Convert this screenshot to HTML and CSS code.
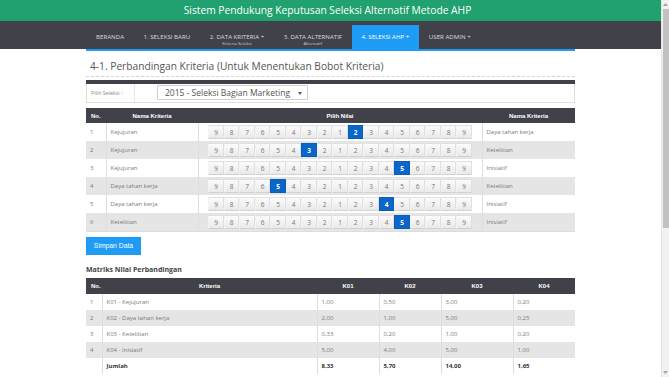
FILE: index.html
```html
<!DOCTYPE html>
<html lang="id">
<head>
<meta charset="utf-8">
<title>Sistem Pendukung Keputusan Seleksi Alternatif Metode AHP</title>
<link rel="stylesheet" href="styles.css">
</head>
<body>
<div class="page">
  <header class="topbar">Sistem Pendukung Keputusan Seleksi Alternatif Metode AHP</header>
  <nav class="navbar">
    <div class="nav-inner">
      <div class="nav-item"><span class="nav-label">BERANDA</span></div>
      <div class="nav-item"><span class="nav-label">1. SELEKSI BARU</span></div>
      <div class="nav-item"><span class="nav-label">2. DATA KRITERIA +</span><span class="nav-sub">Kriteria Seleksi</span></div>
      <div class="nav-item"><span class="nav-label">3. DATA ALTERNATIF</span><span class="nav-sub">Alternatif</span></div>
      <div class="nav-item active"><span class="nav-label">4. SELEKSI AHP +</span></div>
      <div class="nav-item"><span class="nav-label">USER ADMIN +</span></div>
    </div>
  </nav>
  <main class="content">
    <h2 class="page-title">4-1. Perbandingan Kriteria (Untuk Menentukan Bobot Kriteria)</h2>
    <div class="select-panel">
      <div class="panel-top"></div>
      <div class="select-row">
        <div class="select-label">Pilih Seleksi :</div>
        <div class="select-cell">
          <div class="select-box">2015 - Seleksi Bagian Marketing <svg class="caret" width="4" height="3" viewBox="0 0 4 3"><path d="M0 0H4L2 3Z" fill="#555"/></svg></div>
        </div>
      </div>
    </div>

    <table class="cmp">
      <colgroup><col class="c-no"><col class="c-name"><col class="c-pick"><col class="c-name2"></colgroup>
      <thead>
        <tr><th class="left">No.</th><th>Nama Kriteria</th><th>Pilih Nilai</th><th>Nama Kriteria</th></tr>
      </thead>
      <tbody>
        <tr><td>1</td><td>Kejujuran</td><td class="pick"><div class="btn-group"><span class="b">9</span><span class="b">8</span><span class="b">7</span><span class="b">6</span><span class="b">5</span><span class="b">4</span><span class="b">3</span><span class="b">2</span><span class="b">1</span><span class="b on">2</span><span class="b">3</span><span class="b">4</span><span class="b">5</span><span class="b">6</span><span class="b">7</span><span class="b">8</span><span class="b">9</span></div></td><td>Daya tahan kerja</td></tr>
        <tr><td>2</td><td>Kejujuran</td><td class="pick"><div class="btn-group"><span class="b">9</span><span class="b">8</span><span class="b">7</span><span class="b">6</span><span class="b">5</span><span class="b">4</span><span class="b on">3</span><span class="b">2</span><span class="b">1</span><span class="b">2</span><span class="b">3</span><span class="b">4</span><span class="b">5</span><span class="b">6</span><span class="b">7</span><span class="b">8</span><span class="b">9</span></div></td><td>Ketelitian</td></tr>
        <tr><td>3</td><td>Kejujuran</td><td class="pick"><div class="btn-group"><span class="b">9</span><span class="b">8</span><span class="b">7</span><span class="b">6</span><span class="b">5</span><span class="b">4</span><span class="b">3</span><span class="b">2</span><span class="b">1</span><span class="b">2</span><span class="b">3</span><span class="b">4</span><span class="b on">5</span><span class="b">6</span><span class="b">7</span><span class="b">8</span><span class="b">9</span></div></td><td>Inisiatif</td></tr>
        <tr><td>4</td><td>Daya tahan kerja</td><td class="pick"><div class="btn-group"><span class="b">9</span><span class="b">8</span><span class="b">7</span><span class="b">6</span><span class="b on">5</span><span class="b">4</span><span class="b">3</span><span class="b">2</span><span class="b">1</span><span class="b">2</span><span class="b">3</span><span class="b">4</span><span class="b">5</span><span class="b">6</span><span class="b">7</span><span class="b">8</span><span class="b">9</span></div></td><td>Ketelitian</td></tr>
        <tr><td>5</td><td>Daya tahan kerja</td><td class="pick"><div class="btn-group"><span class="b">9</span><span class="b">8</span><span class="b">7</span><span class="b">6</span><span class="b">5</span><span class="b">4</span><span class="b">3</span><span class="b">2</span><span class="b">1</span><span class="b">2</span><span class="b">3</span><span class="b on">4</span><span class="b">5</span><span class="b">6</span><span class="b">7</span><span class="b">8</span><span class="b">9</span></div></td><td>Inisiatif</td></tr>
        <tr><td>6</td><td>Ketelitian</td><td class="pick"><div class="btn-group"><span class="b">9</span><span class="b">8</span><span class="b">7</span><span class="b">6</span><span class="b">5</span><span class="b">4</span><span class="b">3</span><span class="b">2</span><span class="b">1</span><span class="b">2</span><span class="b">3</span><span class="b">4</span><span class="b on">5</span><span class="b">6</span><span class="b">7</span><span class="b">8</span><span class="b">9</span></div></td><td>Inisiatif</td></tr>
      </tbody>
    </table>

    <button class="btn-save" type="button">Simpan Data</button>

    <h3 class="section-title">Matriks Nilai Perbandingan</h3>
    <table class="matrix">
      <colgroup><col class="m-no"><col class="m-name"><col class="m-k"><col class="m-k"><col class="m-k3"><col class="m-k"></colgroup>
      <thead>
        <tr><th class="left">No.</th><th>Kriteria</th><th>K01</th><th>K02</th><th>K03</th><th>K04</th></tr>
      </thead>
      <tbody>
        <tr><td>1</td><td>K01 - Kejujuran</td><td>1,00</td><td>0,50</td><td>3,00</td><td>0,20</td></tr>
        <tr><td>2</td><td>K02 - Daya tahan kerja</td><td>2,00</td><td>1,00</td><td>5,00</td><td>0,25</td></tr>
        <tr><td>3</td><td>K03 - Ketelitian</td><td>0,33</td><td>0,20</td><td>1,00</td><td>0,20</td></tr>
        <tr><td>4</td><td>K04 - Inisiatif</td><td>5,00</td><td>4,00</td><td>5,00</td><td>1,00</td></tr>
        <tr class="total"><td></td><td>Jumlah</td><td>8,33</td><td>5,70</td><td>14,00</td><td>1,65</td></tr>
      </tbody>
    </table>
  </main>
</div>
<div class="scrollbar">
  <div class="sb-arrow"><svg width="5" height="3" viewBox="0 0 5 3"><path d="M0 3H5L2.5 0Z" fill="#a3a3a3"/></svg></div>
  <div class="sb-thumb"></div>
  <div class="sb-space"></div>
  <div class="sb-arrow"><svg width="5" height="3" viewBox="0 0 5 3"><path d="M0 0H5L2.5 3Z" fill="#a3a3a3"/></svg></div>
</div>
</body>
</html>
```
FILE: styles.css
```css
* { box-sizing: border-box; }
html, body { margin: 0; padding: 0; }
body {
  display: flex;
  width: 669px;
  height: 377px;
  overflow: hidden;
  background: #fff;
  font-family: "Open Sans", "Liberation Sans", sans-serif;
  color: #666;
}
.page { flex: 1; min-width: 0; }

/* scrollbar */
.scrollbar {
  width: 8px;
  background: #f1f1f1;
  border-left: 1px solid #e4e4e4;
  display: flex;
  flex-direction: column;
  align-items: center;
}
.sb-arrow { height: 9px; display: flex; align-items: center; justify-content: center; }
.sb-thumb { width: 6px; height: 219px; background: #c1c1c1; }
.sb-space { flex: 1; }

/* header */
.topbar {
  background: #21a070;
  color: #fff;
  height: 21px;
  line-height: 21px;
  font-size: 10.25px;
  text-align: center;
  padding-right: 6px;
}
.navbar { background: #414249; height: 28px; }
.nav-inner {
  width: 489px;
  margin: 0 auto;
  height: 30px;
  padding-top: 4px;
  border-bottom: 2px solid #1e9bf5;
  display: flex;
}
.nav-item {
  height: 24px;
  padding: 8px 9.5px 0 10px;
  display: flex;
  flex-direction: column;
  align-items: center;
  color: #d8d8dc;
}
.nav-item.active { background: #1e9bf5; color: #fff; }
.nav-label { font-size: 6.15px; line-height: 8px; white-space: nowrap; }
.nav-sub { font-size: 4.3px; line-height: 5px; white-space: nowrap; color: #cfcfd4; }

/* content */
.content { width: 489px; margin: 0 auto; }
.page-title {
  margin: 10px 0 3px;
  padding: 0 0 3px 4px;
  font-size: 10.2px;
  line-height: 14px;
  font-weight: 400;
  color: #555;
  border-bottom: 1px dashed #d4d4d4;
}
.panel-top { height: 4px; background: #414249; }
.select-row {
  height: 19px;
  display: flex;
  border: 1px solid #dedede;
  border-top: none;
}
.select-label {
  width: 48px;
  font-size: 5.3px;
  line-height: 18px;
  padding-left: 4px;
  color: #888;
  border-right: 1px solid #e6e6e6;
}
.select-cell { flex: 1; padding: 1px 0 0 22px; }
.select-box {
  width: 151px;
  height: 15px;
  border: 1px solid #d0d0d0;
  border-radius: 1px;
  font-size: 8.5px;
  line-height: 13px;
  padding-left: 7px;
  color: #555;
  white-space: nowrap;
}
.caret { margin-left: 6px; vertical-align: middle; }

/* comparison table */
table { border-collapse: collapse; table-layout: fixed; width: 489px; }
.cmp { margin-top: 5px; border-bottom: 1px solid #dcdcdc; }
.c-no { width: 20px; }
.c-name { width: 92px; }
.c-pick { width: 284px; }
.c-name2 { width: 93px; }
th {
  background: #414249;
  color: #fff;
  font-family: "Liberation Sans", Arial, sans-serif;
  font-weight: 700;
  font-size: 6px;
  text-align: center;
  padding: 0;
}
th.left { text-align: left; padding-left: 5px; }
.cmp th { height: 15px; }
td {
  padding: 0 0 0 4px;
  font-size: 6px;
  color: #7a7a7a;
  border-left: 1px solid #dedede;
  white-space: nowrap;
}
td:first-child { border-left: none; padding-left: 4px; }
.cmp td { height: 18px; }
tbody tr:nth-child(even) td { background: #e5e5e5; }
td.pick { padding: 0; text-align: center; }
.btn-group { display: inline-flex; vertical-align: middle; }
.b {
  width: 15.5px;
  height: 14px;
  line-height: 13px;
  text-align: center;
  font-size: 6.5px;
  color: #777;
  background: linear-gradient(#fbfbfb, #e9e9e9);
  border: 1px solid #e0e0e0;
  border-left-color: #f4f4f4;
  border-bottom-color: #d2d2d2;
}
.b.on { background: #0a66c8; border-color: #0a5db8; color: #fff; font-weight: 700; }

.btn-save {
  display: block;
  margin-top: 5px;
  width: 55px;
  height: 18px;
  padding: 0;
  border: none;
  background: #1e9bf5;
  color: #fff;
  font-family: "Liberation Sans", Arial, sans-serif;
  font-size: 6.8px;
}

.section-title {
  margin: 10px 0 3px;
  font-size: 7px;
  line-height: 10px;
  font-weight: 700;
  color: #444;
}
.m-no { width: 16px; }
.m-name { width: 215px; }
.m-k { width: 62px; }
.m-k3 { width: 72px; }
.matrix th { height: 16px; }
.matrix td { height: 16px; }
.matrix tr.total td { font-weight: 700; color: #333; }
```
